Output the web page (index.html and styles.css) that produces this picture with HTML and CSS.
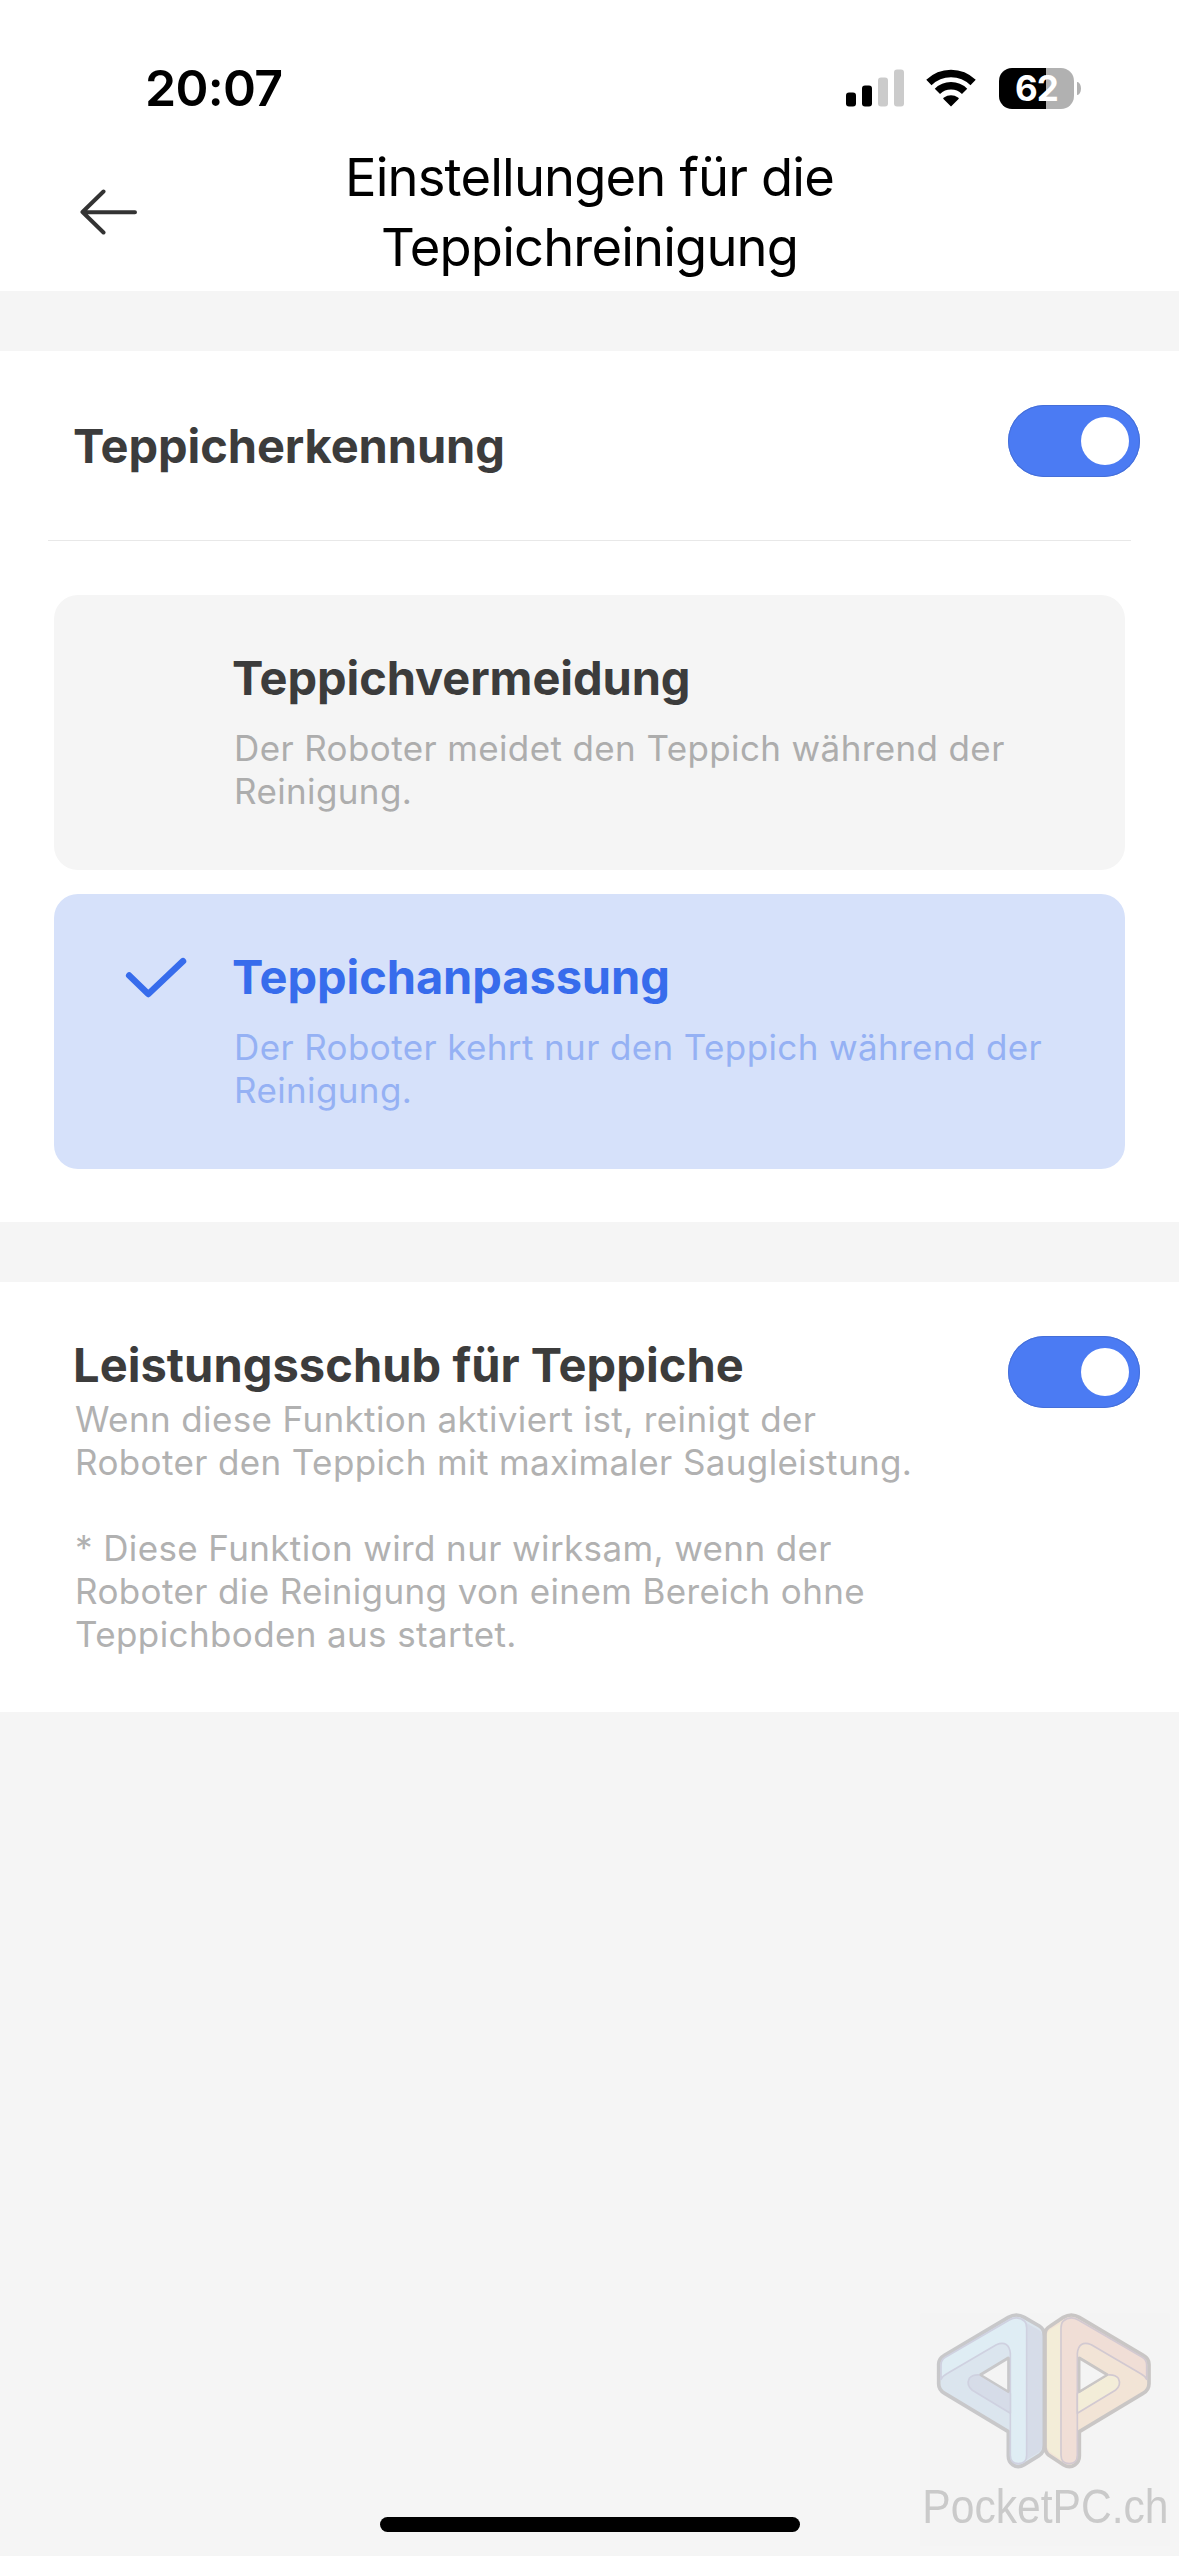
FILE: index.html
```
<!DOCTYPE html>
<html lang="de">
<head>
    <meta charset="UTF-8">
    <meta name="viewport" content="width=device-width, initial-scale=1.0">
    <title>Einstellungen für die Teppichreinigung</title>
    <link rel="stylesheet" href="styles.css">
</head>
<body>
    <div class="status-bar">
        <span class="time">20:07</span>
        <div class="status-icons">
            <svg class="signal" viewBox="0 0 58 38">
                <rect x="0" y="23.5" width="10" height="14" rx="3"/>
                <rect x="16" y="16.5" width="10" height="21" rx="3"/>
                <rect class="off" x="32" y="8.5" width="10" height="29" rx="3"/>
                <rect class="off" x="48" y="0.5" width="10" height="37" rx="3"/>
            </svg>
            <svg class="wifi" viewBox="0 0 50 38">
                <path d="M2.9 13.5A31.5 31.5 0 0 1 47.1 13.5" />
                <path d="M11.4 22.3A19.4 19.4 0 0 1 38.6 22.3" />
                <path class="dot" d="M25 37.5L17.2 29.8Q17.2 29 18 28.5A12 12 0 0 1 32 28.5Q32.8 29 32.8 29.8Z" />
            </svg>
            <div class="battery">
                <div class="battery-body">62</div>
                <div class="battery-cap"></div>
            </div>
        </div>
    </div>

    <header class="header">
        <svg class="back" viewBox="0 0 58 46">
            <path d="M55 23.2L2.5 23M23.5 2.5L2.5 23L23.5 43.5"/>
        </svg>
        <h1>Einstellungen für die<br>Teppichreinigung</h1>
    </header>

    <main>
        <section class="panel">
            <div class="row detection">
                <h2>Teppicherkennung</h2>
                <div class="toggle"></div>
            </div>
            <div class="options">
                <div class="option">
                    <div class="option-icon"></div>
                    <div class="option-text">
                        <h2>Teppichvermeidung</h2>
                        <p>Der Roboter meidet den Teppich während der<br>Reinigung.</p>
                    </div>
                </div>
                <div class="option selected">
                    <div class="option-icon">
                        <svg class="check" viewBox="0 0 62 42">
                            <path d="M4.2 18.5L23.3 37L58 4.2"/>
                        </svg>
                    </div>
                    <div class="option-text">
                        <h2>Teppichanpassung</h2>
                        <p>Der Roboter kehrt nur den Teppich während der<br>Reinigung.</p>
                    </div>
                </div>
            </div>
        </section>

        <section class="panel">
            <div class="row boost">
                <div>
                    <h2>Leistungsschub für Teppiche</h2>
                    <p>Wenn diese Funktion aktiviert ist, reinigt der<br>Roboter den Teppich mit maximaler Saugleistung.</p>
                    <p class="note">* Diese Funktion wird nur wirksam, wenn der<br>Roboter die Reinigung von einem Bereich ohne<br>Teppichboden aus startet.</p>
                </div>
                <div class="toggle"></div>
            </div>
        </section>
    </main>

    <svg class="watermark" viewBox="0 0 837 798">
        <rect x="62" y="70" width="746" height="698" fill="#f4f4f4"/>
        <!-- left half -->
        <g stroke="#cfd1e0" stroke-width="5" stroke-linejoin="round">
            <path d="M325 425L134 310Q116 300 116 281V223Q116 206 132 197L325 82Q349 68 373 82L418 108Q432 117 432 132V472Q432 486 418 496L373 524Q354 536 338 524Q325 515 325 498ZM325 205L242 255L325 305Z" fill="#dbe5ee" fill-rule="evenodd" stroke="#c8c8ca" stroke-width="11"/>
            <path d="M378 98L416 120Q427 127 427 140V464Q427 480 414 488L374 512Z" fill="#d6dce8" stroke="none"/>
            <path d="M123 268V225Q123 210 136 202L328 90Q353 76 374 94Q380 100 380 114V496Q380 521 355 521Q331 521 331 496V190Q327 150 289 164L143 250Q128 258 123 268Z" fill="#dfedf4"/>
            <path d="M331 370L217 301Q198 285 208 265Q218 252 242 255L331 310Z" fill="#d6dce8"/>
            <path d="M325 205L242 255L325 305Z" fill="#f4f4f4" stroke="#c8c8ca" stroke-width="7"/>
        </g>
        <!-- right half -->
        <g stroke="#d2c9d1" stroke-width="5" stroke-linejoin="round">
            <path d="M538 425L729 310Q747 300 747 281V223Q747 206 731 197L538 82Q514 68 490 82L451 108Q435 117 435 132V472Q435 486 447 496L490 524Q509 536 525 524Q538 515 538 498ZM538 205L621 255L538 305Z" fill="#f2e4d6" fill-rule="evenodd" stroke="#c9c6c5" stroke-width="11"/>
            <path d="M485 98L452 118Q441 125 441 140V464Q441 480 453 488L488 512Z" fill="#f3edd8" stroke="none"/>
            <path d="M740 268V225Q740 210 727 202L535 90Q510 76 489 94Q483 100 483 114V496Q483 521 508 521Q532 521 532 496V190Q536 150 574 164L720 250Q735 258 740 268Z" fill="#f0ded6"/>
            <path d="M532 370L646 301Q665 285 655 265Q645 252 621 255L532 310Z" fill="#f3edd8"/>
            <path d="M538 205L621 255L538 305Z" fill="#f4f4f4" stroke="#c9c6c5" stroke-width="7"/>
        </g>
        <text transform="translate(67 700) scale(0.9 1)">PocketPC.ch</text>
    </svg>
    <div class="home-indicator"></div>
</body>
</html>
```
FILE: styles.css
```
:root {
    --accent-color: #4b7bf3;
    --selected-color: #376cec;
    --text-color: #3c3c3c;
    --muted-color: #b1b1b1;
    --background-color: #f5f5f5;
}

* {
    box-sizing: border-box;
}

body {
    margin: 0;
    min-height: 100vh;
    font-family: Inter, "Liberation Sans", sans-serif;
    background-color: var(--background-color);
    color: var(--text-color);
}

h1, h2, p {
    margin: 0;
    white-space: nowrap;
}

/* Status bar */
.status-bar {
    display: flex;
    align-items: center;
    justify-content: space-between;
    height: 142px;
    padding: 58px 98px 24px 145px;
    background-color: #fff;
    color: #000;
}

.time {
    font-size: 50px;
    font-weight: 600;
    line-height: 60px;
    letter-spacing: -0.7px;
}

.status-icons {
    display: flex;
    align-items: center;
}

.signal {
    width: 58px;
    height: 38px;
}

.signal .off {
    fill: #cbcbcb;
}

.wifi {
    width: 50px;
    height: 38px;
    margin: 0 23px 0 22px;
    fill: none;
    stroke: #000;
    stroke-width: 7.5;
}

.wifi .dot {
    fill: #000;
    stroke: none;
}

.battery {
    display: flex;
    align-items: center;
    gap: 3px;
}

.battery-body {
    width: 75px;
    height: 41px;
    border-radius: 13px;
    background: linear-gradient(to right, #000 47px, #b1b1b1 47px);
    color: #fff;
    font-size: 35px;
    font-weight: 700;
    line-height: 41px;
    letter-spacing: -1px;
    text-align: center;
}

.battery-cap {
    width: 4px;
    height: 13px;
    border-radius: 0 4px 4px 0 / 0 7px 7px 0;
    background-color: #b1b1b1;
}

/* Header */
.header {
    display: grid;
    grid-template-columns: 140px 1fr 140px;
    align-items: start;
    height: 149px;
    background-color: #fff;
}

.back {
    width: 58px;
    height: 46px;
    margin: 47px 0 0 80px;
    fill: none;
    stroke: #333;
    stroke-width: 4;
    stroke-linecap: round;
    stroke-linejoin: round;
}

.header h1 {
    color: #000;
    font-size: 52.5px;
    font-weight: 400;
    line-height: 70px;
    letter-spacing: -0.85px;
    text-align: center;
}

/* Panels */
.panel {
    margin-top: 60px;
    background-color: #fff;
}

.panel h2 {
    font-size: 47px;
    font-weight: 700;
    line-height: 58px;
    letter-spacing: -0.1px;
}

.panel p {
    color: var(--muted-color);
    font-size: 35px;
    line-height: 43px;
    letter-spacing: 0.38px;
}

.row {
    display: flex;
    align-items: flex-start;
    justify-content: space-between;
}

.detection {
    height: 190px;
    margin: 0 48px;
    padding: 54px 0 0 25px;
    border-bottom: 1px solid #e8e8e8;
}

.detection h2 {
    margin-top: 12px;
}

.detection .toggle {
    margin-right: -9px;
}

.boost {
    padding: 54px 39px 56px 73px;
}

.boost h2 {
    letter-spacing: 0.05px;
}

.boost p {
    margin: 4px 0 0 2px;
}

.boost .note {
    margin-top: 43px;
}

.toggle {
    display: flex;
    justify-content: flex-end;
    flex-shrink: 0;
    width: 132px;
    height: 72px;
    padding: 12px 11px;
    border-radius: 36px;
    background-color: var(--accent-color);
    box-shadow: inset 0 0 0 1px #456fd8;
}

.toggle::after {
    content: "";
    width: 48px;
    height: 48px;
    border-radius: 50%;
    background-color: #fff;
}

/* Options */
.options {
    display: flex;
    flex-direction: column;
    gap: 24.5px;
    padding: 54px 54px 53px;
}

.option {
    display: flex;
    height: 274.5px;
    padding-top: 54px;
    border-radius: 24px;
    background-color: var(--background-color);
}

.option-icon {
    width: 178px;
    padding: 9px 0 0 71px;
}

.check {
    display: block;
    width: 62px;
    height: 42px;
    fill: none;
    stroke: var(--selected-color);
    stroke-width: 6.5;
    stroke-linecap: round;
    stroke-linejoin: round;
}

.option p {
    margin: 20px 0 0 2px;
    color: #adadad;
}

.option.selected {
    background-color: #d6e1fa;
}

.selected h2 {
    color: var(--selected-color);
}

.selected p {
    color: #95b1f4;
}

/* Overlays */
.watermark {
    position: fixed;
    right: 0;
    bottom: 0;
    width: 279px;
    height: 266px;
}

.watermark text {
    fill: #cacaca;
    font-family: "Liberation Sans", Arial, sans-serif;
    font-size: 142px;
}

.home-indicator {
    position: fixed;
    left: 50%;
    bottom: 24px;
    width: 420px;
    height: 15px;
    margin-left: -210px;
    border-radius: 8px;
    background-color: #000;
}
```
